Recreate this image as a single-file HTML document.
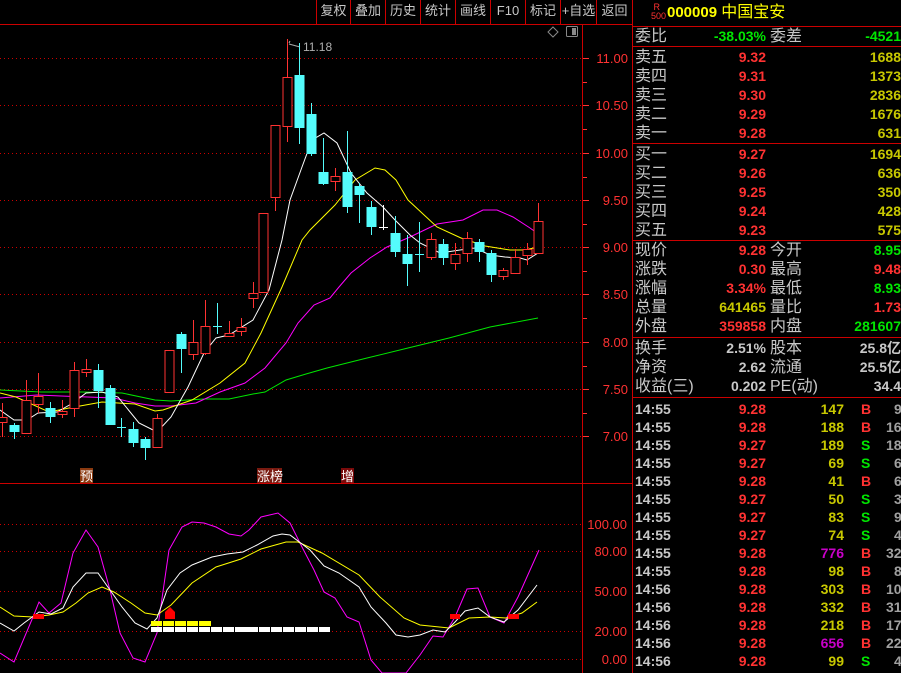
<!DOCTYPE html>
<html><head><meta charset="utf-8"><style>
*{margin:0;padding:0;box-sizing:border-box}
body{width:901px;height:673px;background:#000;overflow:hidden;position:relative;font-family:"Liberation Sans","WenQuanYi Zen Hei","Noto Sans CJK SC",sans-serif}
.tb{position:absolute;top:0;height:24px;color:#c8c8c8;font-size:13px;line-height:22px;text-align:center;border-left:1px solid #c00;white-space:nowrap;overflow:hidden}
.r{position:absolute;height:19px;font-size:14px;line-height:19px;white-space:nowrap;font-weight:bold}
.lb{color:#c8c8c8;font-size:16px;font-weight:normal}
.rd{color:#ff3232}.yl{color:#c8c800}.gr{color:#00e600}.wh{color:#c8c8c8}.pu{color:#c800c8}.gy{color:#a0a0a0}
.hl{position:absolute;left:633px;width:268px;height:1px;background:#c00}
.t span{font-weight:bold}
</style></head><body>
<svg width="901" height="673" style="position:absolute;left:0;top:0">
<g stroke="#c00" stroke-width="1">
<line x1="0" y1="24.5" x2="632" y2="24.5"/>
<line x1="582.5" y1="25" x2="582.5" y2="673"/>
<line x1="632.5" y1="0" x2="632.5" y2="673"/>
<line x1="0" y1="483.5" x2="632" y2="483.5"/>
</g>
<g stroke="#c00" stroke-dasharray="1,3">
<line x1="0" y1="58.5" x2="582" y2="58.5"/><line x1="0" y1="105.5" x2="582" y2="105.5"/>
<line x1="0" y1="153.5" x2="582" y2="153.5"/><line x1="0" y1="200.5" x2="582" y2="200.5"/>
<line x1="0" y1="247.5" x2="582" y2="247.5"/><line x1="0" y1="294.5" x2="582" y2="294.5"/>
<line x1="0" y1="342.5" x2="582" y2="342.5"/><line x1="0" y1="389.5" x2="582" y2="389.5"/>
<line x1="0" y1="436.5" x2="582" y2="436.5"/>
<line x1="0" y1="524.5" x2="582" y2="524.5"/><line x1="0" y1="551.5" x2="582" y2="551.5"/>
<line x1="0" y1="591.5" x2="582" y2="591.5"/><line x1="0" y1="631.5" x2="582" y2="631.5"/>
<line x1="0" y1="659.5" x2="582" y2="659.5"/>
</g>
<g stroke="#ff3232">
<line x1="583" y1="58.5" x2="589" y2="58.5"/><line x1="583" y1="82.5" x2="587" y2="82.5"/><line x1="583" y1="105.5" x2="589" y2="105.5"/><line x1="583" y1="129.5" x2="587" y2="129.5"/><line x1="583" y1="153.5" x2="589" y2="153.5"/><line x1="583" y1="177.5" x2="587" y2="177.5"/><line x1="583" y1="200.5" x2="589" y2="200.5"/><line x1="583" y1="224.5" x2="587" y2="224.5"/><line x1="583" y1="247.5" x2="589" y2="247.5"/><line x1="583" y1="271.5" x2="587" y2="271.5"/><line x1="583" y1="294.5" x2="589" y2="294.5"/><line x1="583" y1="318.5" x2="587" y2="318.5"/><line x1="583" y1="342.5" x2="589" y2="342.5"/><line x1="583" y1="366.5" x2="587" y2="366.5"/><line x1="583" y1="389.5" x2="589" y2="389.5"/><line x1="583" y1="413.5" x2="587" y2="413.5"/><line x1="583" y1="436.5" x2="589" y2="436.5"/>
</g>
<g fill="#ff3232" font-size="13" text-anchor="end" font-family="Liberation Sans">
<text x="628" y="63">11.00</text><text x="628" y="110">10.50</text><text x="628" y="158">10.00</text><text x="628" y="205">9.50</text><text x="628" y="252">9.00</text><text x="628" y="299">8.50</text><text x="628" y="347">8.00</text><text x="628" y="394">7.50</text><text x="628" y="441">7.00</text>
<text x="627" y="529">100.00</text><text x="627" y="556">80.00</text><text x="627" y="596">50.00</text><text x="627" y="636">20.00</text><text x="627" y="664">0.00</text>
</g>
<path d="M553 27 L558 32 L553 37 L548 32 Z" fill="none" stroke="#888"/>
<rect x="566.5" y="26.5" width="11" height="10" fill="none" stroke="#888" rx="1"/><rect x="572" y="28" width="4" height="7" fill="#888"/>
<path d="M289 43 L290 41 M289 44 L300 47" stroke="#aaa" fill="none"/>
<text x="303" y="51" fill="#b0b0b0" font-size="12" font-family="Liberation Sans">11.18</text>
<polyline fill="none" stroke="#00e600" points="0,390 41,392 82,392 122,393 155,400 171,401 204,399 229,399 253,394 265,392 286,380 306,374 327,368 367,358 408,348 449,338 490,327 538,318"/>
<polyline fill="none" stroke="#ff00ff" points="0,398 37,395 61,396 114,398 135,403 155,406 171,406 196,403 220,392 245,383 265,368 286,343 298,323 314,305 330,298 339,287 351,273 370,258 387,247 410,237 437,224 463,220 483,210 497,210 513,217 530,228 537,233"/>
<polyline fill="none" stroke="#ffff00" points="0,393 16,397 49,412 69,408 102,402 135,404 155,411 163,410 192,400 220,383 245,363 261,333 282,287 302,240 310,230 335,205 355,180 375,168 385,170 396,180 408,200 437,227 461,238 485,246 510,250 525,250 538,247"/>
<polyline fill="none" stroke="#fff" points="0,410 14,420 27,420 38,413 57,412 73,403 86,393 102,392 118,397 139,423 157,432 171,417 188,387 204,353 216,338 229,335 253,320 269,290 282,240 290,200 302,167 312,140 324,133 337,143 351,173 367,193 383,207 395,220 410,235 420,243 440,253 460,250 475,248 490,255 505,257 520,258 527,260 538,253"/>
<g stroke-width="1">
<g stroke="#ff3232" fill="#000">
<line x1="2.5" y1="403" x2="2.5" y2="437"/><rect x="-2" y="417.5" width="9" height="5"/>
<line x1="26.5" y1="380" x2="26.5" y2="433"/><rect x="22" y="400.5" width="9" height="33"/>
<line x1="38.5" y1="373" x2="38.5" y2="413"/><rect x="34" y="396.5" width="9" height="8"/>
<line x1="62.5" y1="400" x2="62.5" y2="418"/><rect x="58" y="411.5" width="9" height="3"/>
<line x1="74.5" y1="362" x2="74.5" y2="417"/><rect x="70" y="370.5" width="9" height="38"/>
<line x1="86.5" y1="359" x2="86.5" y2="377"/><rect x="82" y="369.5" width="9" height="3"/>
<line x1="157.5" y1="414" x2="157.5" y2="447"/><rect x="153" y="418.5" width="9" height="29"/>
<rect x="165" y="350.5" width="9" height="42"/>
<line x1="193.5" y1="320" x2="193.5" y2="360"/><rect x="189" y="342.5" width="9" height="12"/>
<line x1="205.5" y1="300" x2="205.5" y2="355"/><rect x="201" y="326.5" width="9" height="27"/>
<line x1="229.5" y1="321" x2="229.5" y2="337"/><rect x="225" y="333.5" width="9" height="3"/>
<line x1="241.5" y1="318" x2="241.5" y2="336"/><rect x="237" y="327.5" width="9" height="4"/>
<line x1="253.5" y1="282" x2="253.5" y2="308"/><rect x="249" y="293.5" width="9" height="5"/>
<rect x="259" y="213.5" width="9" height="79"/>
<line x1="275.5" y1="125" x2="275.5" y2="211"/><rect x="271" y="125.5" width="9" height="72"/>
<line x1="287.5" y1="39" x2="287.5" y2="142"/><rect x="283" y="77.5" width="9" height="49"/>
<line x1="335.5" y1="168" x2="335.5" y2="191"/><rect x="331" y="176.5" width="9" height="5"/>
<line x1="431.5" y1="233" x2="431.5" y2="260"/><rect x="427" y="239.5" width="9" height="18"/>
<line x1="455.5" y1="243" x2="455.5" y2="270"/><rect x="451" y="254.5" width="9" height="9"/>
<line x1="467.5" y1="232" x2="467.5" y2="262"/><rect x="463" y="238.5" width="9" height="15"/>
<line x1="503.5" y1="268" x2="503.5" y2="280"/><rect x="499" y="270.5" width="9" height="6"/>
<line x1="515.5" y1="249" x2="515.5" y2="274"/><rect x="511" y="257.5" width="9" height="16"/>
<line x1="527.5" y1="243" x2="527.5" y2="265"/><rect x="523" y="249.5" width="9" height="6"/>
<line x1="538.5" y1="203" x2="538.5" y2="253"/><rect x="534" y="221.5" width="9" height="32"/>
</g>
<g stroke="#54fcfc" fill="#54fcfc">
<line x1="14.5" y1="423" x2="14.5" y2="439"/><rect x="10" y="425.5" width="9" height="6"/>
<line x1="50.5" y1="402" x2="50.5" y2="423"/><rect x="46" y="408.5" width="9" height="8"/>
<line x1="98.5" y1="364" x2="98.5" y2="408"/><rect x="94" y="370.5" width="9" height="20"/>
<line x1="110.5" y1="385" x2="110.5" y2="425"/><rect x="106" y="388.5" width="9" height="36"/>
<line x1="121.5" y1="418" x2="121.5" y2="437"/><line x1="117" y1="427.5" x2="126" y2="427.5"/>
<line x1="133.5" y1="422" x2="133.5" y2="447"/><rect x="129" y="429.5" width="9" height="13"/>
<line x1="145.5" y1="437" x2="145.5" y2="460"/><rect x="141" y="439.5" width="9" height="8"/>
<line x1="181.5" y1="332" x2="181.5" y2="373"/><rect x="177" y="334.5" width="9" height="14"/>
<line x1="217.5" y1="303" x2="217.5" y2="334"/><line x1="213" y1="326.5" x2="222" y2="326.5"/>
<line x1="299.5" y1="43" x2="299.5" y2="144"/><rect x="295" y="75.5" width="9" height="52"/>
<line x1="311.5" y1="103" x2="311.5" y2="156"/><rect x="307" y="114.5" width="9" height="39"/>
<line x1="323.5" y1="138" x2="323.5" y2="185"/><rect x="319" y="172.5" width="9" height="11"/>
<line x1="347.5" y1="131" x2="347.5" y2="213"/><rect x="343" y="172.5" width="9" height="34"/>
<line x1="359.5" y1="183" x2="359.5" y2="223"/><rect x="355" y="186.5" width="9" height="8"/>
<line x1="371.5" y1="201" x2="371.5" y2="235"/><rect x="367" y="207.5" width="9" height="19"/>
<line x1="395.5" y1="216" x2="395.5" y2="257"/><rect x="391" y="233.5" width="9" height="18"/>
<line x1="407.5" y1="235" x2="407.5" y2="286"/><rect x="403" y="254.5" width="9" height="9"/>
<line x1="419.5" y1="222" x2="419.5" y2="272"/><line x1="415" y1="254.5" x2="424" y2="254.5"/>
<line x1="443.5" y1="239" x2="443.5" y2="265"/><rect x="439" y="244.5" width="9" height="13"/>
<line x1="479.5" y1="239" x2="479.5" y2="262"/><rect x="475" y="242.5" width="9" height="9"/>
<line x1="491.5" y1="250" x2="491.5" y2="282"/><rect x="487" y="253.5" width="9" height="21"/>
</g>
<g stroke="#fff"><line x1="383.5" y1="205" x2="383.5" y2="230"/><line x1="379" y1="227.5" x2="388" y2="227.5"/></g>
</g>
<rect x="80" y="468" width="13" height="15" fill="#8b3a10"/><text x="80" y="481" fill="#fff" font-size="13" font-family="WenQuanYi Zen Hei">预</text>
<rect x="257" y="468" width="25" height="15" fill="#7a1a10"/><text x="257" y="481" fill="#fff" font-size="13" font-family="WenQuanYi Zen Hei">涨榜</text>
<rect x="341" y="468" width="13" height="15" fill="#7a0a0a"/><text x="341" y="481" fill="#fff" font-size="13" font-family="WenQuanYi Zen Hei">增</text>
<polyline fill="none" stroke="#ff00ff" points="0,653 14,662 33,617 39,602 49,613 61,603 73,553 86,530 98,547 110,590 120,633 133,658 145,662 157,633 169,550 182,527 192,522 204,523 216,527 229,534 241,536 249,530 261,517 278,513 290,523 302,547 314,570 324,592 335,598 347,617 359,622 371,660 382,673 406,673 420,655 433,636 443,637 455,617 467,589 478,588 490,617 504,623 518,597 539,550"/>
<polyline fill="none" stroke="#ffff00" points="0,607 14,616 33,617 49,615 63,612 76,603 88,593 102,587 114,592 131,603 145,613 157,615 171,605 192,583 216,567 241,559 261,549 286,542 298,542 322,553 359,575 380,597 404,618 420,625 449,628 469,618 490,617 506,618 522,613 537,602"/>
<polyline fill="none" stroke="#fff" points="0,623 14,631 24,623 39,612 51,614 63,608 73,587 86,573 98,573 110,590 122,607 135,623 147,629 157,618 167,590 180,573 192,565 212,557 227,554 243,552 257,545 273,536 282,534 290,535 310,550 324,566 339,573 359,587 371,607 386,623 396,635 408,637 420,635 433,630 445,632 455,622 465,611 478,608 490,617 504,622 518,610 537,585"/>
<g fill="#ff0000">
<rect x="33" y="614" width="11" height="5"/>
<path d="M165 619 L165 612 L170 607 L175 612 L175 619 Z"/>
<rect x="450" y="614" width="10" height="5"/>
<rect x="508" y="614" width="11" height="5"/>
</g>
<g fill="#ffff00">
<rect x="151" y="621" width="11" height="5"/><rect x="163" y="621" width="11" height="5"/><rect x="175" y="621" width="11" height="5"/><rect x="187" y="621" width="11" height="5"/><rect x="199" y="621" width="12" height="5"/>
</g>
<g fill="#fff">
<rect x="151" y="627" width="11" height="5"/><rect x="163" y="627" width="11" height="5"/><rect x="175" y="627" width="11" height="5"/><rect x="187" y="627" width="11" height="5"/><rect x="199" y="627" width="11" height="5"/><rect x="211" y="627" width="11" height="5"/><rect x="223" y="627" width="11" height="5"/><rect x="235" y="627" width="23" height="5"/><rect x="259" y="627" width="11" height="5"/><rect x="271" y="627" width="11" height="5"/><rect x="283" y="627" width="11" height="5"/><rect x="295" y="627" width="11" height="5"/><rect x="307" y="627" width="11" height="5"/><rect x="319" y="627" width="11" height="5"/>
</g>
</svg>

<div class="tb" style="left:316px;width:34px">复权</div>
<div class="tb" style="left:350px;width:35px">叠加</div>
<div class="tb" style="left:385px;width:35px">历史</div>
<div class="tb" style="left:420px;width:35px">统计</div>
<div class="tb" style="left:455px;width:35px">画线</div>
<div class="tb" style="left:490px;width:35px">F10</div>
<div class="tb" style="left:525px;width:35px">标记</div>
<div class="tb" style="left:560px;width:36px">+自选</div>
<div class="tb" style="left:596px;width:36px">返回</div>

<div style="position:absolute;left:651px;top:3px;color:#ff3232;font-size:9px;line-height:9px">&nbsp;R<br>500</div>
<div style="position:absolute;left:667px;top:4px;color:#ffff00;font-size:15px;font-weight:bold;line-height:18px">000009 <span style="font-weight:normal;font-size:16px">中国宝安</span></div>
<div class="hl" style="top:26px"></div>
<div class="hl" style="top:46px"></div>
<div class="hl" style="top:143px"></div>
<div class="hl" style="top:240px"></div>
<div class="hl" style="top:337px"></div>
<div class="hl" style="top:397px"></div>

<div style="position:absolute;left:635px;top:0;width:266px;font-size:14px">
<div class="r lb" style="top:27px;left:0">委比</div><div class="r gr" style="top:27px;right:135px">-38.03%</div><div class="r lb" style="top:27px;left:135px">委差</div><div class="r gr" style="top:27px;right:0">-4521</div>

<div class="r lb" style="top:48px;left:0">卖五</div><div class="r rd" style="top:48px;right:135px">9.32</div><div class="r yl" style="top:48px;right:0">1688</div>
<div class="r lb" style="top:67px;left:0">卖四</div><div class="r rd" style="top:67px;right:135px">9.31</div><div class="r yl" style="top:67px;right:0">1373</div>
<div class="r lb" style="top:86px;left:0">卖三</div><div class="r rd" style="top:86px;right:135px">9.30</div><div class="r yl" style="top:86px;right:0">2836</div>
<div class="r lb" style="top:105px;left:0">卖二</div><div class="r rd" style="top:105px;right:135px">9.29</div><div class="r yl" style="top:105px;right:0">1676</div>
<div class="r lb" style="top:124px;left:0">卖一</div><div class="r rd" style="top:124px;right:135px">9.28</div><div class="r yl" style="top:124px;right:0">631</div>

<div class="r lb" style="top:145px;left:0">买一</div><div class="r rd" style="top:145px;right:135px">9.27</div><div class="r yl" style="top:145px;right:0">1694</div>
<div class="r lb" style="top:164px;left:0">买二</div><div class="r rd" style="top:164px;right:135px">9.26</div><div class="r yl" style="top:164px;right:0">636</div>
<div class="r lb" style="top:183px;left:0">买三</div><div class="r rd" style="top:183px;right:135px">9.25</div><div class="r yl" style="top:183px;right:0">350</div>
<div class="r lb" style="top:202px;left:0">买四</div><div class="r rd" style="top:202px;right:135px">9.24</div><div class="r yl" style="top:202px;right:0">428</div>
<div class="r lb" style="top:221px;left:0">买五</div><div class="r rd" style="top:221px;right:135px">9.23</div><div class="r yl" style="top:221px;right:0">575</div>

<div class="r lb" style="top:241px;left:0">现价</div><div class="r rd" style="top:241px;right:135px">9.28</div><div class="r lb" style="top:241px;left:135px">今开</div><div class="r gr" style="top:241px;right:0">8.95</div>
<div class="r lb" style="top:260px;left:0">涨跌</div><div class="r rd" style="top:260px;right:135px">0.30</div><div class="r lb" style="top:260px;left:135px">最高</div><div class="r rd" style="top:260px;right:0">9.48</div>
<div class="r lb" style="top:279px;left:0">涨幅</div><div class="r rd" style="top:279px;right:135px">3.34%</div><div class="r lb" style="top:279px;left:135px">最低</div><div class="r gr" style="top:279px;right:0">8.93</div>
<div class="r lb" style="top:298px;left:0">总量</div><div class="r yl" style="top:298px;right:135px">641465</div><div class="r lb" style="top:298px;left:135px">量比</div><div class="r rd" style="top:298px;right:0">1.73</div>
<div class="r lb" style="top:317px;left:0">外盘</div><div class="r rd" style="top:317px;right:135px">359858</div><div class="r lb" style="top:317px;left:135px">内盘</div><div class="r gr" style="top:317px;right:0">281607</div>

<div class="r lb" style="top:339px;left:0">换手</div><div class="r wh" style="top:339px;right:135px">2.51%</div><div class="r lb" style="top:339px;left:135px">股本</div><div class="r wh" style="top:339px;right:0">25.8亿</div>
<div class="r lb" style="top:358px;left:0">净资</div><div class="r wh" style="top:358px;right:135px">2.62</div><div class="r lb" style="top:358px;left:135px">流通</div><div class="r wh" style="top:358px;right:0">25.5亿</div>
<div class="r lb" style="top:377px;left:0">收益(三)</div><div class="r wh" style="top:377px;right:135px">0.202</div><div class="r lb" style="top:377px;left:135px">PE(动)</div><div class="r wh" style="top:377px;right:0">34.4</div>
</div>

<div class="t" style="position:absolute;left:635px;top:400px;width:266px;font-size:14px;line-height:18px">
<div style="position:relative;height:18px"><span class="wh" style="position:absolute;left:0">14:55</span><span class="rd" style="position:absolute;right:135px">9.28</span><span class="yl" style="position:absolute;right:57px">147</span><span class="rd" style="position:absolute;left:226px">B</span><span class="gy" style="position:absolute;left:259px">9</span></div>
<div style="position:relative;height:18px"><span class="wh" style="position:absolute;left:0">14:55</span><span class="rd" style="position:absolute;right:135px">9.28</span><span class="yl" style="position:absolute;right:57px">188</span><span class="rd" style="position:absolute;left:226px">B</span><span class="gy" style="position:absolute;left:251px">16</span></div>
<div style="position:relative;height:18px"><span class="wh" style="position:absolute;left:0">14:55</span><span class="rd" style="position:absolute;right:135px">9.27</span><span class="yl" style="position:absolute;right:57px">189</span><span class="gr" style="position:absolute;left:226px">S</span><span class="gy" style="position:absolute;left:251px">18</span></div>
<div style="position:relative;height:18px"><span class="wh" style="position:absolute;left:0">14:55</span><span class="rd" style="position:absolute;right:135px">9.27</span><span class="yl" style="position:absolute;right:57px">69</span><span class="gr" style="position:absolute;left:226px">S</span><span class="gy" style="position:absolute;left:259px">6</span></div>
<div style="position:relative;height:18px"><span class="wh" style="position:absolute;left:0">14:55</span><span class="rd" style="position:absolute;right:135px">9.28</span><span class="yl" style="position:absolute;right:57px">41</span><span class="rd" style="position:absolute;left:226px">B</span><span class="gy" style="position:absolute;left:259px">6</span></div>
<div style="position:relative;height:18px"><span class="wh" style="position:absolute;left:0">14:55</span><span class="rd" style="position:absolute;right:135px">9.27</span><span class="yl" style="position:absolute;right:57px">50</span><span class="gr" style="position:absolute;left:226px">S</span><span class="gy" style="position:absolute;left:259px">3</span></div>
<div style="position:relative;height:18px"><span class="wh" style="position:absolute;left:0">14:55</span><span class="rd" style="position:absolute;right:135px">9.27</span><span class="yl" style="position:absolute;right:57px">83</span><span class="gr" style="position:absolute;left:226px">S</span><span class="gy" style="position:absolute;left:259px">9</span></div>
<div style="position:relative;height:18px"><span class="wh" style="position:absolute;left:0">14:55</span><span class="rd" style="position:absolute;right:135px">9.27</span><span class="yl" style="position:absolute;right:57px">74</span><span class="gr" style="position:absolute;left:226px">S</span><span class="gy" style="position:absolute;left:259px">4</span></div>
<div style="position:relative;height:18px"><span class="wh" style="position:absolute;left:0">14:55</span><span class="rd" style="position:absolute;right:135px">9.28</span><span class="pu" style="position:absolute;right:57px">776</span><span class="rd" style="position:absolute;left:226px">B</span><span class="gy" style="position:absolute;left:251px">32</span></div>
<div style="position:relative;height:18px"><span class="wh" style="position:absolute;left:0">14:55</span><span class="rd" style="position:absolute;right:135px">9.28</span><span class="yl" style="position:absolute;right:57px">98</span><span class="rd" style="position:absolute;left:226px">B</span><span class="gy" style="position:absolute;left:259px">8</span></div>
<div style="position:relative;height:18px"><span class="wh" style="position:absolute;left:0">14:56</span><span class="rd" style="position:absolute;right:135px">9.28</span><span class="yl" style="position:absolute;right:57px">303</span><span class="rd" style="position:absolute;left:226px">B</span><span class="gy" style="position:absolute;left:251px">10</span></div>
<div style="position:relative;height:18px"><span class="wh" style="position:absolute;left:0">14:56</span><span class="rd" style="position:absolute;right:135px">9.28</span><span class="yl" style="position:absolute;right:57px">332</span><span class="rd" style="position:absolute;left:226px">B</span><span class="gy" style="position:absolute;left:251px">31</span></div>
<div style="position:relative;height:18px"><span class="wh" style="position:absolute;left:0">14:56</span><span class="rd" style="position:absolute;right:135px">9.28</span><span class="yl" style="position:absolute;right:57px">218</span><span class="rd" style="position:absolute;left:226px">B</span><span class="gy" style="position:absolute;left:251px">17</span></div>
<div style="position:relative;height:18px"><span class="wh" style="position:absolute;left:0">14:56</span><span class="rd" style="position:absolute;right:135px">9.28</span><span class="pu" style="position:absolute;right:57px">656</span><span class="rd" style="position:absolute;left:226px">B</span><span class="gy" style="position:absolute;left:251px">22</span></div>
<div style="position:relative;height:18px"><span class="wh" style="position:absolute;left:0">14:56</span><span class="rd" style="position:absolute;right:135px">9.28</span><span class="yl" style="position:absolute;right:57px">99</span><span class="gr" style="position:absolute;left:226px">S</span><span class="gy" style="position:absolute;left:259px">4</span></div>
</div>
</body></html>
